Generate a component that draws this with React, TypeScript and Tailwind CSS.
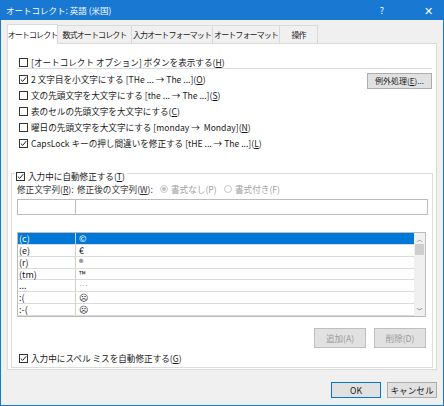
import React from 'react';

const Check: React.FC<{ checked?: boolean }> = ({ checked }) => (
  <span className="w-[9px] h-[9px] border border-[#333] bg-white flex items-center justify-center shrink-0">
    {checked && (
      <svg width="7" height="7" viewBox="0 0 7 7">
        <path d="M0.8 3.6 L2.7 5.4 L6.2 1.2" fill="none" stroke="#222" strokeWidth="1" />
      </svg>
    )}
  </span>
);

const CheckRow: React.FC<{ checked?: boolean; children: React.ReactNode; className?: string }> = ({ checked, children, className }) => (
  <div className={'flex items-center gap-[3px] h-[16px] ' + (className ?? '')}>
    <Check checked={checked} />
    <span className="whitespace-nowrap">{children}</span>
  </div>
);

const rows = [
  { from: '(c)', to: '©', selected: true },
  { from: '(e)', to: '€' },
  { from: '(r)', to: '®' },
  { from: '(tm)', to: '™' },
  { from: '...', to: '…', faded: true },
  { from: ':(', to: '☹' },
  { from: ':-(', to: '☹' },
];

export default function App() {
  return (
    <div className="w-[444px] h-[406px] border border-[#1979d2] bg-[#f0f0f0] flex flex-col font-['Noto_Sans_CJK_JP','Noto_Sans',sans-serif] text-[8.6px] text-[#1a1a1a] leading-none overflow-hidden">
      {/* title bar */}
      <div className="h-[19px] bg-[#1979d2] flex items-center text-white shrink-0">
        <span className="pl-[5px] text-[8.5px]">オートコレクト: 英語 (米国)</span>
        <span className="ml-auto mr-[40px] text-[9px]">?</span>
        <span className="mr-[10px] text-[11px]">✕</span>
      </div>

      {/* tabs */}
      <div className="flex items-end px-[6px] pt-[4px] h-[23px] shrink-0 whitespace-nowrap text-[8px] tracking-[-0.9px]">
        <div className="h-[20px] w-[51px] bg-white border border-b-0 border-[#d9d9d9] flex items-center justify-center relative z-10 -mb-px">
          オートコレクト
        </div>
        <div className="h-[18px] w-[74px] border border-b-0 border-l-0 border-[#d9d9d9] flex items-center justify-center">数式オートコレクト</div>
        <div className="h-[18px] w-[81px] border border-b-0 border-l-0 border-[#d9d9d9] flex items-center justify-center">入力オートフォーマット</div>
        <div className="h-[18px] w-[67px] border border-b-0 border-l-0 border-[#d9d9d9] flex items-center justify-center">オートフォーマット</div>
        <div className="h-[18px] w-[38px] border border-b-0 border-l-0 border-[#d9d9d9] flex items-center justify-center">操作</div>
      </div>

      {/* panel */}
      <div className="mx-[6px] h-[327px] bg-white border border-[#d9d9d9] flex flex-col px-[3px] shrink-0">
        <CheckRow className="mt-[10px] ml-[8px]">[オートコレクト オプション] ボタンを表示する(<u>H</u>)</CheckRow>
        <div className="h-px bg-[#dcdcdc] mt-[-2px] ml-[6px] mr-[1px]" />
        <div className="flex mt-[2px]">
          <div className="flex flex-col ml-[8px]">
            <CheckRow checked>2 文字目を小文字にする [THe ... → The ...](<u>O</u>)</CheckRow>
            <CheckRow>文の先頭文字を大文字にする [the ... → The ...](<u>S</u>)</CheckRow>
            <CheckRow>表のセルの先頭文字を大文字にする(<u>C</u>)</CheckRow>
            <CheckRow>曜日の先頭文字を大文字にする [monday → &nbsp;Monday](<u>N</u>)</CheckRow>
            <CheckRow checked>CapsLock キーの押し間違いを修正する [tHE ... → The ...](<u>L</u>)</CheckRow>
          </div>
          <button className="ml-auto mr-[1px] mt-[2px] w-[65px] h-[16px] bg-[#e1e1e1] border border-[#adadad] flex items-center justify-center whitespace-nowrap text-[8px]">
            例外処理(<u>E</u>)...
          </button>
        </div>

        {/* group box */}
        <div className="mt-[22px] h-[195px] border border-[#dcdcdc] flex flex-col px-[5px] relative">
          <div className="absolute -top-[6px] left-[3px] bg-white pr-[2px] pl-[1px]">
            <CheckRow checked className="h-[11px]">入力中に自動修正する(<u>T</u>)</CheckRow>
          </div>
          <div className="flex items-center mt-[10px] h-[10px] text-[#333] whitespace-nowrap">
            <span className="w-[60px]">修正文字列(<u>R</u>):</span>
            <span className="w-[83px]">修正後の文字列(<u>W</u>):</span>
            <span className="flex items-center gap-[3px] text-[#a0a0a0] w-[64px]">
              <span className="w-[8px] h-[8px] rounded-full border border-[#c8c8c8] flex items-center justify-center">
                <span className="w-[4px] h-[4px] rounded-full bg-[#c0c0c0]" />
              </span>
              書式なし(P)
            </span>
            <span className="flex items-center gap-[3px] text-[#a0a0a0]">
              <span className="w-[8px] h-[8px] rounded-full border border-[#c8c8c8]" />
              書式付き(F)
            </span>
          </div>
          <div className="flex mt-[5px] h-[16px] mr-[-1px]">
            <div className="w-[59px] border border-[#bcbcbc] bg-white" />
            <div className="flex-1 border border-l-0 border-[#bcbcbc] bg-white" />
          </div>

          {/* list */}
          <div className="mt-[17px] h-[85px] border border-[#bcbcbc] flex mr-[1px]">
            <div className="flex-1 flex flex-col">
              {rows.map((r, i) => (
                <div
                  key={i}
                  className={
                    'h-[12px] flex border-b border-[#dadada] text-[9px] ' +
                    (r.selected ? 'bg-[#0078d7] text-white' : '')
                  }
                >
                  <span className="w-[58px] pl-[1px] flex items-center border-r border-[#cfcfcf]">{r.from}</span>
                  <span className={'pl-[3px] flex items-center ' + (r.faded ? 'text-[#aaa]' : '')}>{r.to}</span>
                </div>
              ))}
            </div>
            <div className="w-[11px] bg-[#f0f0f0] flex flex-col items-center">
              <span className="h-[11px] flex items-center text-[6px] text-[#606060]">︿</span>
              <div className="w-[9px] h-[11px] bg-[#cdcdcd]" />
              <span className="mt-auto h-[11px] flex items-center text-[6px] text-[#606060]">﹀</span>
            </div>
          </div>

          <div className="flex justify-end gap-[8px] mt-[11px] mr-[1px]">
            <button className="w-[52px] h-[20px] bg-[#e1e1e1] border border-[#bfbfbf] text-[#9a9a9a]">追加(A)</button>
            <button className="w-[52px] h-[20px] bg-[#e1e1e1] border border-[#bfbfbf] text-[#9a9a9a]">削除(D)</button>
          </div>
          <CheckRow checked className="mt-[2px] ml-[2px]">入力中にスペル ミスを自動修正する(<u>G</u>)</CheckRow>
        </div>
      </div>

      {/* bottom buttons */}
      <div className="flex justify-end gap-[6px] mt-[12px] mr-[6px]">
        <button className="w-[50px] h-[16px] bg-[#e1e1e1] border border-[#0078d7]">OK</button>
        <button className="w-[50px] h-[16px] bg-[#e1e1e1] border border-[#adadad]">キャンセル</button>
      </div>
    </div>
  );
}
